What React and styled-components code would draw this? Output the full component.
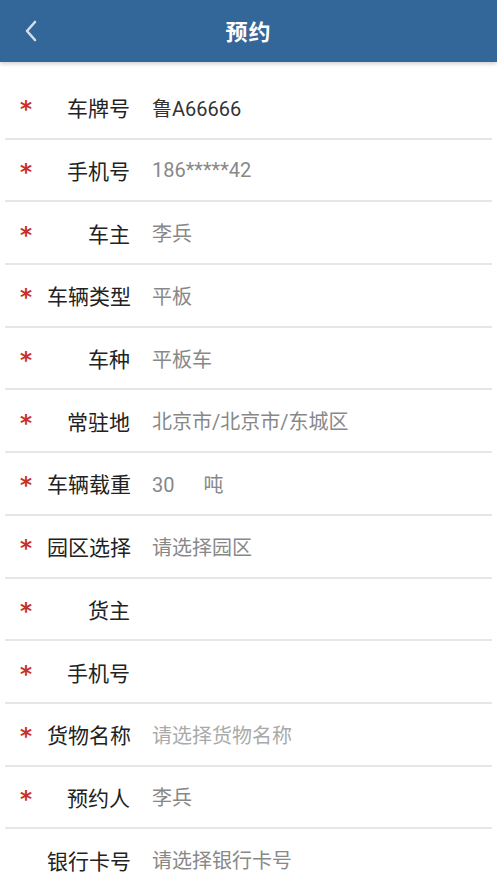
import React from "react";
import styled, { createGlobalStyle } from "styled-components";

const GlobalStyle = createGlobalStyle`
  * { box-sizing: border-box; }
  body {
    margin: 0;
    background: #fff;
    font-family: Roboto, "Noto Sans CJK SC", "Noto Sans", sans-serif;
  }
`;

const rows = [
  { label: "车牌号", value: "鲁A66666", tone: "dark", required: true },
  { label: "手机号", value: "186*****42", tone: "gray", required: true },
  { label: "车主", value: "李兵", tone: "gray", required: true },
  { label: "车辆类型", value: "平板", tone: "gray", required: true },
  { label: "车种", value: "平板车", tone: "gray", required: true },
  { label: "常驻地", value: "北京市/北京市/东城区", tone: "gray", required: true },
  { label: "车辆载重", value: "30", unit: "吨", tone: "gray", required: true },
  { label: "园区选择", value: "请选择园区", tone: "gray", required: true },
  { label: "货主", value: "", required: true },
  { label: "手机号", value: "", required: true },
  { label: "货物名称", value: "请选择货物名称", tone: "light", required: true },
  { label: "预约人", value: "李兵", tone: "gray", required: true },
  { label: "银行卡号", value: "请选择银行卡号", tone: "gray", required: false },
];

const toneColors = { dark: "#333", gray: "#888", light: "#aaa" };

const Page = styled.div`
  min-height: 883px;
  background: #fff;
`;

const Header = styled.header`
  height: 62px;
  background: #346799;
  display: flex;
  align-items: center;
  justify-content: center;
  position: relative;
  box-shadow: 0 2px 4px rgba(0, 0, 0, 0.18);
`;

const Back = styled.button`
  position: absolute;
  left: 18px;
  top: 17px;
  width: 26px;
  height: 28px;
  padding: 0;
  border: none;
  background: transparent;
  display: flex;
  align-items: center;
  justify-content: center;
`;

const Title = styled.h1`
  margin: 0 0 2px;
  color: #fff;
  font-size: 22px;
  font-weight: 700;
  letter-spacing: 1px;
`;

const Form = styled.div`
  padding-top: 15px;
`;

const Row = styled.div`
  height: 62.7px;
  margin: 0 5px;
  display: flex;
  align-items: center;
  border-bottom: 2px solid #e6e6e6;
`;

const Star = styled.span`
  width: 42px;
  text-align: center;
  color: #c8302a;
  font-family: "DejaVu Sans", sans-serif;
  font-weight: 700;
  font-size: 23px;
  line-height: 1;
  padding-top: 5px;
`;

const Label = styled.span`
  width: 83px;
  text-align: right;
  color: #222;
  font-size: 21px;
  white-space: nowrap;
`;

const Value = styled.span`
  margin-left: 22px;
  color: ${(p) => toneColors[p.$tone] || "#888"};
  font-size: 20px;
  white-space: nowrap;
  display: flex;
  align-items: baseline;
  gap: 29px;
`;

export default function App() {
  return (
    <Page>
      <GlobalStyle />
      <Header>
        <Back aria-label="返回">
          <svg width="14" height="22" viewBox="0 0 14 22">
            <polyline
              points="11,2 3,11 11,20"
              fill="none"
              stroke="#d4dde8"
              strokeWidth="2.6"
              strokeLinecap="round"
              strokeLinejoin="round"
            />
          </svg>
        </Back>
        <Title>预约</Title>
      </Header>
      <Form>
        {rows.map((r, i) => (
          <Row key={i}>
            <Star>{r.required ? "*" : ""}</Star>
            <Label>{r.label}</Label>
            <Value $tone={r.tone}>
              <span>{r.value}</span>
              {r.unit && <span>{r.unit}</span>}
            </Value>
          </Row>
        ))}
      </Form>
    </Page>
  );
}
